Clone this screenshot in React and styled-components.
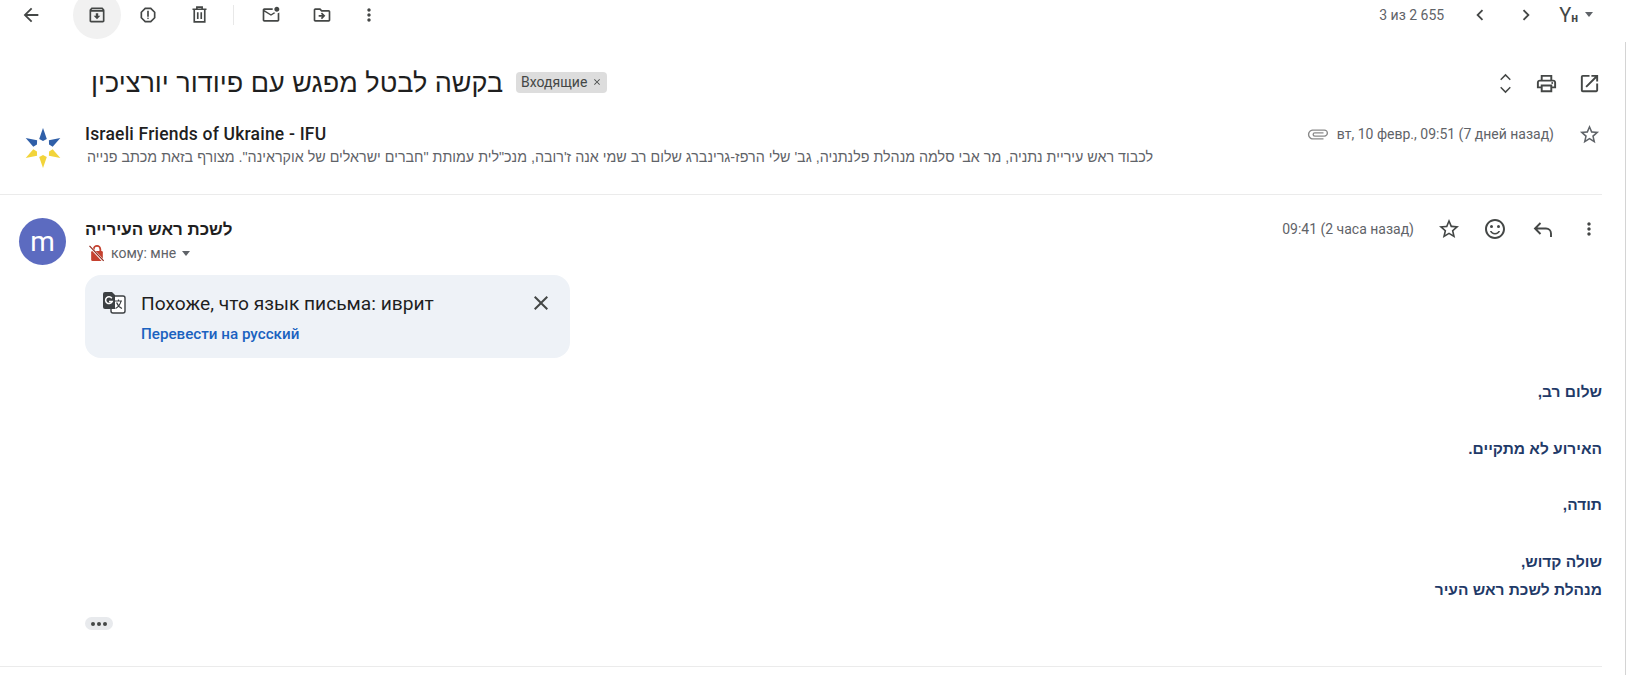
import React from 'react'
import styled, { createGlobalStyle } from 'styled-components'
import {
  MdArrowBack, MdOutlineArchive, MdOutlineReport, MdOutlineMarkEmailUnread,
  MdOutlineDriveFileMove, MdMoreVert, MdChevronLeft, MdChevronRight, MdOutlinePrint,
  MdOpenInNew, MdStarBorder, MdOutlineSentimentSatisfied, MdClose, MdAttachFile,
} from 'react-icons/md'

const GlobalStyle = createGlobalStyle`
  html, body { margin: 0; padding: 0; background: #fff; }
  body { width: 1627px; height: 675px; overflow: hidden; font-family: Roboto, "Liberation Sans", sans-serif; color: #202124; }
`

const Toolbar = styled.div`
  display: flex;
  align-items: center;
  height: 29px;
  padding-left: 7px;
`
const ToolButton = styled.div`
  flex: none;
  display: flex;
  justify-content: center;
  align-items: center;
  width: ${p => p.$w || 48}px;
  height: 48px;
  margin-left: ${p => p.$ml || 0}px;
  border-radius: 50%;
  color: #444746;
  font-size: ${p => p.$size || 20}px;
  background: ${p => (p.$active ? '#f1f1f1' : 'transparent')};
`
const Divider = styled.div`
  flex: none;
  width: 1px;
  height: 20px;
  margin: 0 13px 0 10px;
  background: #e8e8e8;
`
const Pager = styled.div`
  display: flex;
  align-items: center;
  margin-left: auto;
  padding-right: 34px;
`
const Count = styled.span`
  font-size: 14px;
  color: #5f6368;
  margin-right: 13px;
`
const LangIcon = styled.span`
  margin-left: 10px;
  font-size: 20px;
  color: #444746;
  & small { font-size: 12px; font-weight: 700; }
`
const Caret = styled.span`
  display: inline-block;
  margin-left: ${p => p.$ml || 6}px;
  border-left: 4px solid transparent;
  border-right: 4px solid transparent;
  border-top: 5px solid #5f6368;
`
const Main = styled.main`
  width: 1625px;
  height: 633px;
  margin-top: 13px;
  border-right: 1px solid #d4d4d4;
`
const Content = styled.div`
  width: 1602px;
`
const SubjectRow = styled.div`
  display: flex;
  align-items: center;
  height: 82px;
  padding-left: 91px;
`
const Subject = styled.h1`
  margin: 0;
  font: 400 27px "Liberation Sans", sans-serif;
  color: #1f1f1f;
`
const Chip = styled.span`
  display: inline-flex;
  align-items: center;
  height: 21px;
  margin: 0 0 2px 13px;
  padding: 0 5px;
  border-radius: 4px;
  background: #dddddd;
  color: #444746;
  font-size: 14px;
  & svg { margin-left: 5px; font-size: 10px; }
`
const SubjectTools = styled.div`
  display: flex;
  align-items: center;
  gap: 20px;
  margin-left: auto;
  margin-right: 1px;
  font-size: 23px;
  color: #444746;
  & > svg:first-child { margin-right: -2px; }
`
const CollapsedRow = styled.div`
  display: flex;
  height: 70px;
  border-bottom: 1px solid #ebebeb;
`
const Logo = styled.svg`
  flex: none;
  width: 44px;
  height: 44px;
  margin: 2px 20px 0 21px;
`
const CollapsedBody = styled.div`
  flex: 1;
  min-width: 0;
`
const CollapsedTop = styled.div`
  display: flex;
  align-items: center;
  height: 24px;
  margin-top: -2px;
`
const SenderName = styled.span`
  font-size: 17.5px;
  font-weight: 500;
  letter-spacing: 0.2px;
  color: #1f1f1f;
`
const Clip = styled.span`
  display: flex;
  margin-left: auto;
  margin-right: 8px;
  font-size: 22px;
  color: #8a8a8a;
  transform: rotate(90deg);
`
const DateText = styled.span`
  font-size: 14px;
  color: #5f6368;
`
const StarSlot = styled.span`
  display: flex;
  width: 24px;
  margin-left: 24px;
  font-size: 23px;
  color: #5f6368;
`
const Snippet = styled.div`
  width: 1068px;
  margin-top: 3px;
  direction: rtl;
  white-space: nowrap;
  font: 400 14.3px "Liberation Sans", sans-serif;
  color: #5f6368;
`
const Message = styled.section`
  display: flex;
  height: 471px;
  border-bottom: 1px solid #ebebeb;
`
const Avatar = styled.div`
  flex: none;
  display: flex;
  justify-content: center;
  align-items: center;
  width: 47px;
  height: 47px;
  margin: 23px 19px 0 19px;
  border-radius: 50%;
  background: #5c6bc0;
  color: #fff;
  font-size: 28px;
  line-height: 1;
`
const MessageBody = styled.div`
  flex: 1;
  min-width: 0;
`
const MessageTop = styled.div`
  display: flex;
  align-items: center;
  height: 28px;
  margin-top: 21px;
`
const HebrewName = styled.span`
  font: 700 17px "Liberation Sans", sans-serif;
  color: #1f1f1f;
`
const MessageActions = styled.div`
  display: flex;
  align-items: center;
  margin-left: auto;
  margin-right: 1px;
  margin-top: -2px;
  color: #444746;
`
const ActionSlot = styled.span`
  display: flex;
  justify-content: center;
  width: 24px;
  margin-left: ${p => p.$ml}px;
  font-size: ${p => p.$size || 24}px;
`
const ToLine = styled.div`
  display: flex;
  align-items: center;
  height: 20px;
  margin-top: -1px;
  padding-left: 2px;
  font-size: 14px;
  color: #5f6368;
`
const LockIcon = styled.svg`
  flex: none;
  width: 20px;
  height: 20px;
  margin-right: 4px;
`
const TranslateCard = styled.div`
  position: relative;
  box-sizing: border-box;
  width: 485px;
  height: 83px;
  margin-top: 12px;
  padding: 17px 0 0 56px;
  border-radius: 16px;
  background: #eef2f7;
`
const CardIcon = styled.svg`
  position: absolute;
  left: 17px;
  top: 16px;
  width: 24px;
  height: 24px;
`
const CardTitle = styled.div`
  font-size: 19.2px;
  line-height: 24px;
  color: #1f1f1f;
`
const CardLink = styled.a`
  display: block;
  margin-top: 9px;
  font-size: 15.2px;
  font-weight: 500;
  color: #1a62c0;
`
const CardClose = styled.span`
  position: absolute;
  right: 17px;
  top: 16px;
  display: flex;
  font-size: 24px;
  color: #444746;
`
const Letter = styled.div`
  margin-top: 20px;
  margin-left: -85px;
  direction: rtl;
  font: 700 15.5px/28.3px "Liberation Sans", sans-serif;
  color: #1f3a68;
`
const LetterLine = styled.div`
  min-height: 28.3px;
`
const MoreDots = styled.div`
  display: flex;
  justify-content: center;
  align-items: center;
  gap: 2px;
  width: 28px;
  height: 13px;
  margin-top: 13px;
  border-radius: 7px;
  background: #e8eaed;
`
const Dot = styled.i`
  width: 4px;
  height: 4px;
  border-radius: 50%;
  background: #444746;
`

const petals = [0, 60, -60, 120, 180, 240]

const LineIcon = ({ size = 24, children }) => (
  <svg width={size} height={size} viewBox="0 0 24 24" fill="none" stroke="currentColor" strokeWidth="1.9">
    {children}
  </svg>
)

const App = () => (
  <>
    <GlobalStyle />
    <Toolbar>
      <ToolButton $size={22}><MdArrowBack /></ToolButton>
      <ToolButton $ml={18} $active><MdOutlineArchive /></ToolButton>
      <ToolButton $ml={3}><MdOutlineReport /></ToolButton>
      <ToolButton $ml={3}>
        <LineIcon size={21}>
          <path d="M4 6h16M9 6V3.5h6V6M6 6v14.5h12V6M10 9.5v7.5M14 9.5v7.5" />
        </LineIcon>
      </ToolButton>
      <Divider />
      <ToolButton><MdOutlineMarkEmailUnread /></ToolButton>
      <ToolButton $ml={3}><MdOutlineDriveFileMove /></ToolButton>
      <ToolButton $ml={3} $w={40}><MdMoreVert /></ToolButton>
      <Pager>
        <Count>3 из 2 655</Count>
        <ToolButton $size={22} $w={46}><MdChevronLeft /></ToolButton>
        <ToolButton $size={22} $w={46}><MdChevronRight /></ToolButton>
        <LangIcon>Y<small>н</small></LangIcon>
        <Caret $ml={7} />
      </Pager>
    </Toolbar>
    <Main>
      <Content>
        <SubjectRow>
          <Subject dir="rtl">בקשה לבטל מפגש עם פיודור יורציכין</Subject>
          <Chip>Входящие<MdClose /></Chip>
          <SubjectTools>
            <LineIcon size={23}>
              <path d="M7 8l5-5 5 5M7 16l5 5 5-5" strokeWidth="1.5" />
            </LineIcon>
            <MdOutlinePrint />
            <MdOpenInNew />
          </SubjectTools>
        </SubjectRow>
        <CollapsedRow>
          <Logo viewBox="0 0 44 44">
            {petals.map((deg, i) => (
              <polygon
                key={deg}
                points="22,2 25.8,13 22,15 18.2,13"
                fill={i < 3 ? '#2f5fa8' : '#f2d43a'}
                transform={`rotate(${deg} 22 22)`}
              />
            ))}
          </Logo>
          <CollapsedBody>
            <CollapsedTop>
              <SenderName>Israeli Friends of Ukraine - IFU</SenderName>
              <Clip><MdAttachFile /></Clip>
              <DateText>вт, 10 февр., 09:51 (7 дней назад)</DateText>
              <StarSlot><MdStarBorder /></StarSlot>
            </CollapsedTop>
            <Snippet>לכבוד ראש עיריית נתניה, מר אבי סלמה מנהלת פלנתניה, גב' שלי הרפז-גרינברג שלום רב שמי אנה ז'רובה, מנכ"לית עמותת "חברים ישראלים של אוקראינה". מצורף בזאת מכתב פנייה</Snippet>
          </CollapsedBody>
        </CollapsedRow>
        <Message>
          <Avatar>m</Avatar>
          <MessageBody>
            <MessageTop>
              <HebrewName dir="rtl">לשכת ראש העירייה</HebrewName>
              <MessageActions>
                <DateText>09:41 (2 часа назад)</DateText>
                <ActionSlot $ml={23}><MdStarBorder /></ActionSlot>
                <ActionSlot $ml={22}><MdOutlineSentimentSatisfied /></ActionSlot>
                <ActionSlot $ml={24}>
                  <LineIcon>
                    <path d="M9.5 6L4 11.5 9.5 17M4 11.5h11a5 5 0 0 1 5 5V20" />
                  </LineIcon>
                </ActionSlot>
                <ActionSlot $ml={22} $size={20}><MdMoreVert /></ActionSlot>
              </MessageActions>
            </MessageTop>
            <ToLine>
              <LockIcon viewBox="0 0 24 24">
                <path d="M8 10V7.5a4 4 0 0 1 8 0V10" fill="none" stroke="#c5412f" strokeWidth="2.2" />
                <rect x="5" y="9.5" width="14" height="12" rx="1.5" fill="#c5412f" />
                <path d="M4 5l16 17" stroke="#fff" strokeWidth="3" />
                <path d="M3 3.5l17 18" stroke="#8f2d20" strokeWidth="1.4" />
              </LockIcon>
              кому: мне<Caret $ml={6} />
            </ToLine>
            <TranslateCard>
              <CardIcon viewBox="0 0 24 24">
                <rect x="9" y="5" width="14" height="17" rx="2" fill="#fff" stroke="#3c4043" strokeWidth="1.4" />
                <path d="M13 10h7M16.5 8.5V10M19 10c-.6 3.2-2.8 6-5.5 7.5M14.6 11.5c1 2.5 3 5 5.4 6" fill="none" stroke="#3c4043" strokeWidth="1.2" />
                <path d="M3 1h7l3 3v14H3a2 2 0 0 1-2-2V3a2 2 0 0 1 2-2z" fill="#3c4043" />
                <path d="M9.8 7.2A3.4 3.4 0 1 0 10.2 10.4H7" fill="none" stroke="#fff" strokeWidth="1.5" />
              </CardIcon>
              <CardTitle>Похоже, что язык письма: иврит</CardTitle>
              <CardLink>Перевести на русский</CardLink>
              <CardClose><MdClose /></CardClose>
            </TranslateCard>
            <Letter>
              <LetterLine>שלום רב,</LetterLine>
              <LetterLine />
              <LetterLine>האירוע לא מתקיים.</LetterLine>
              <LetterLine />
              <LetterLine>תודה,</LetterLine>
              <LetterLine />
              <LetterLine>שולה קדוש,</LetterLine>
              <LetterLine>מנהלת לשכת ראש העיר</LetterLine>
            </Letter>
            <MoreDots><Dot /><Dot /><Dot /></MoreDots>
          </MessageBody>
        </Message>
      </Content>
    </Main>
  </>
)

export default App
